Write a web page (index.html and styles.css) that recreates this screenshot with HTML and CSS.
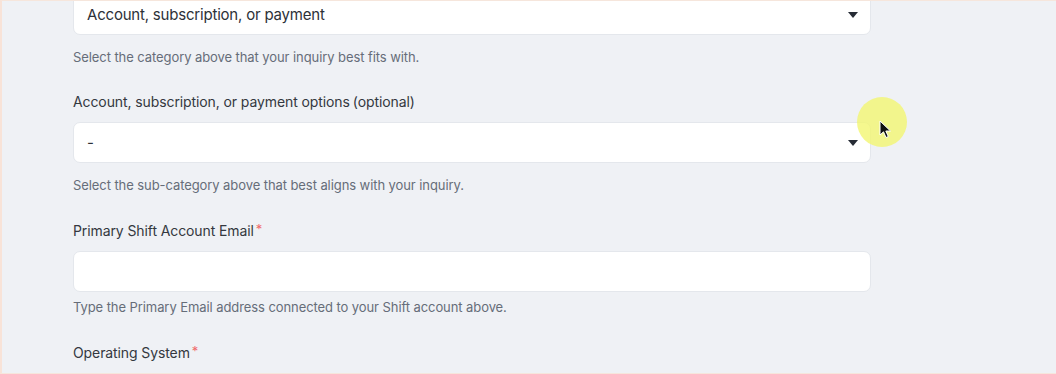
FILE: index.html
```html
<!DOCTYPE html>
<html lang="en">
<head>
    <meta charset="UTF-8">
    <meta name="viewport" content="width=device-width, initial-scale=1.0">
    <title>Support request</title>
    <link rel="stylesheet" href="styles.css">
</head>
<body>
    <div class="page">
        <form class="form" onsubmit="return false">
            <div class="field">
                <div class="select">
                    <span class="select__value">Account, subscription, or payment</span>
                    <span class="select__arrow"></span>
                </div>
                <p class="field__help field__help--select">Select the category above that your inquiry best fits with.</p>
            </div>

            <div class="field field--sub">
                <label class="field__label">Account, subscription, or payment options<span class="field__opt">(optional)</span></label>
                <div class="select">
                    <span class="select__value">-</span>
                    <span class="select__arrow"></span>
                </div>
                <p class="field__help field__help--select">Select the sub-category above that best aligns with your inquiry.</p>
            </div>

            <div class="field field--text">
                <label class="field__label">Primary Shift Account Email<span class="req">*</span></label>
                <input class="input" type="email">
                <p class="field__help">Type the Primary Email address connected to your Shift account above.</p>
            </div>

            <div class="field">
                <label class="field__label">Operating System<span class="req">*</span></label>
                <div class="select select--cut"></div>
            </div>
        </form>

        <div class="cursor">
            <svg width="14" height="20" viewBox="0 0 14 20">
                <path d="M1 1 L1 15 L4.5 11.8 L7 17.5 L9.3 16.5 L6.8 11 L11.5 11 Z" fill="#111" stroke="#fff" stroke-width="1"/>
            </svg>
        </div>
    </div>
</body>
</html>
```

FILE: styles.css
```css
* { margin: 0; padding: 0; box-sizing: border-box; }
html, body { height: 100%; }
body {
    font-family: Inter, "Noto Sans", Arial, sans-serif;
    background: #eff1f5;
    overflow: hidden;
}
.page {
    position: relative;
    height: 100%;
    overflow: hidden;
    border-left: 2px solid #f8e3d8;
    border-top: 1px solid #f6e6dc;
    border-bottom: 1px solid #f6e6dc;
    padding-left: 71px;
}
.form {
    width: 798px;
    margin-top: -7px;
}
.field {
    margin-bottom: 25px;
}
.field--sub,
.field--text {
    margin-bottom: 24px;
}
.field__label {
    display: block;
    font-size: 14px;
    line-height: 20px;
    letter-spacing: -0.1px;
    color: #343840;
    margin-bottom: 10px;
}
.field__opt {
    margin-left: 3px;
}
.req {
    color: #ef6b6b;
    font-size: 13px;
    margin-left: 2px;
    vertical-align: 2px;
}
.select,
.input {
    display: flex;
    align-items: center;
    justify-content: space-between;
    width: 100%;
    height: 41px;
    background: #fff;
    border: 1px solid #e4e7ec;
    border-radius: 7px;
    padding: 0 12px 0 13px;
}
.input {
    display: block;
    outline: none;
}
.select--cut {
    height: 20px;
}
.select__value {
    font-size: 15px;
    letter-spacing: -0.2px;
    color: #2d3138;
}
.select__arrow {
    width: 0;
    height: 0;
    border-left: 5.5px solid transparent;
    border-right: 5.5px solid transparent;
    border-top: 6px solid #262b35;
}
.field__help {
    font-size: 13px;
    line-height: 20px;
    letter-spacing: -0.08px;
    color: #666d79;
    margin-top: 5px;
}
.field__help--select {
    margin-top: 12px;
}
.cursor {
    position: absolute;
    left: 855px;
    top: 96px;
    width: 50px;
    height: 50px;
    border-radius: 50%;
    background: rgba(242, 246, 110, 0.78);
}
.cursor svg {
    position: absolute;
    left: 22px;
    top: 23px;
}
```
